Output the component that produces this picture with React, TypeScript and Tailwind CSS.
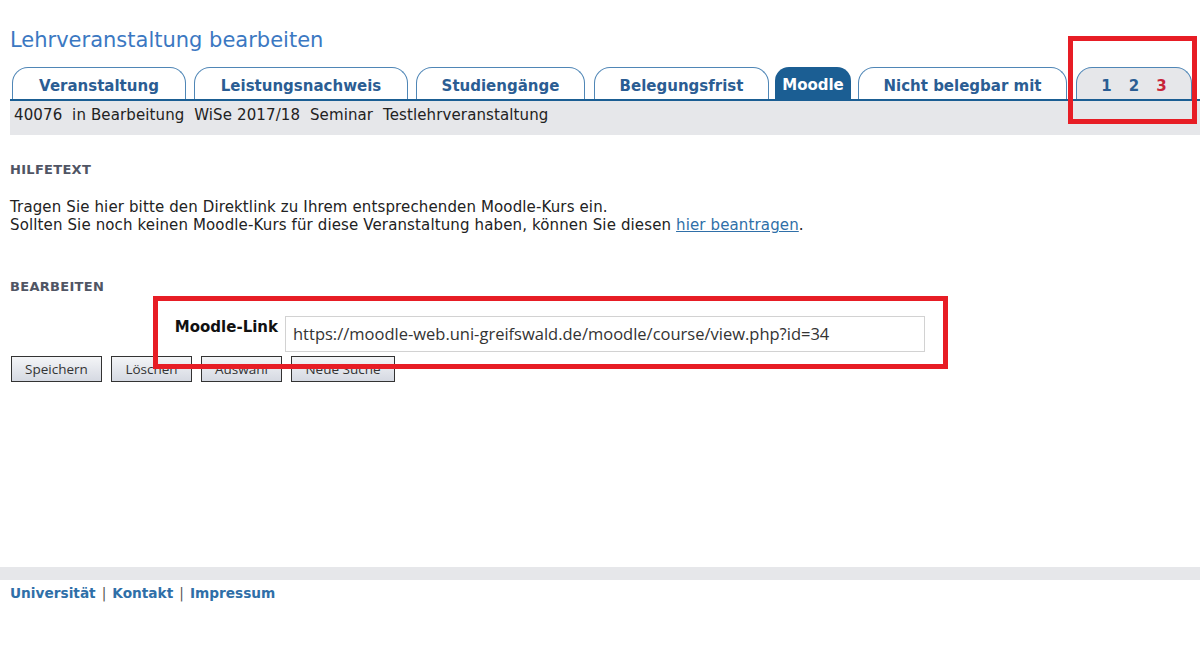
import React from 'react';

const tabs = [
  { label: 'Veranstaltung', cls: 'ml-0 w-[174px]' },
  { label: 'Leistungsnachweis', cls: 'ml-[8px] w-[214px]' },
  { label: 'Studiengänge', cls: 'ml-[8px] w-[169px]' },
  { label: 'Belegungsfrist', cls: 'ml-[9px] w-[175px]' },
];

export default function App() {
  return (
    <div className="relative min-h-[653px] bg-white font-['DejaVu_Sans','Verdana',sans-serif] text-[#222]">
      {/* Titel */}
      <h1 className="pl-[10px] pt-[27px] text-[21px] leading-[26px] text-[#3b78c2]">Lehrveranstaltung bearbeiten</h1>

      {/* Reiter */}
      <div className="ml-[10px] mt-[14px] flex items-end border-b-2 border-[#1b5e93] pl-[2px]">
        {tabs.map((t) => (
          <div
            key={t.label}
            className={`${t.cls} flex h-[32px] items-center justify-center rounded-t-[16px] border border-b-0 border-[#4f86b6] bg-white pt-[5px] text-[15px] font-bold text-[#2b5d93]`}
          >
            {t.label}
          </div>
        ))}
        <div className="ml-[6px] flex h-[32px] w-[76px] items-center justify-center rounded-t-[14px] bg-[#1b5e93] pt-[5px] text-[15px] font-bold text-white">
          Moodle
        </div>
        <div className="ml-[7px] flex h-[32px] w-[209px] items-center justify-center rounded-t-[16px] border border-b-0 border-[#4f86b6] bg-white pt-[5px] text-[15px] font-bold text-[#2b5d93]">
          Nicht belegbar mit
        </div>
        <div className="ml-[9px] flex h-[32px] w-[116px] items-center justify-center gap-[17px] rounded-t-[16px] border border-b-0 border-[#4f86b6] bg-[#e6e7ea] pt-[5px] text-[15px] font-bold text-[#2b5d93]">
          <span>1</span>
          <span>2</span>
          <span className="text-[#c8253a]">3</span>
        </div>
      </div>

      {/* Info-Leiste */}
      <div className="ml-[10px] flex h-[34px] items-start whitespace-pre bg-[#e6e7ea] pl-[4px] pt-[5px] text-[15px] leading-[18px] tracking-[0.12px] text-[#222]">
        40076  in Bearbeitung  WiSe 2017/18  Seminar  Testlehrveranstaltung
      </div>

      {/* Hilfetext */}
      <div className="px-[10px]">
        <h2 className="mt-[27px] text-[13px] font-bold leading-[16px] tracking-[0.3px] text-[#505564]">HILFETEXT</h2>
        <p className="mt-[20px] text-[15px] leading-[18px] tracking-[0.13px] text-[#222]">
          Tragen Sie hier bitte den Direktlink zu Ihrem entsprechenden Moodle-Kurs ein.
          <br />
          Sollten Sie noch keinen Moodle-Kurs für diese Veranstaltung haben, können Sie diesen{' '}
          <a href="#" className="text-[#2f6fa8] underline">hier beantragen</a>.
        </p>

        <h2 className="mt-[45px] text-[13px] font-bold leading-[16px] tracking-[0.3px] text-[#505564]">BEARBEITEN</h2>

        <div className="mt-[21px] flex items-start">
          <label className="w-[275px] pr-[7px] pt-[2px] text-right text-[15px] font-bold leading-[18px] text-[#111]">
            Moodle-Link
          </label>
          <div className="flex h-[36px] w-[640px] items-center border border-[#d2d2d2] bg-white pl-[7px] font-['Open_Sans',sans-serif] text-[16.5px] text-[#333]">
            https://moodle-web.uni-greifswald.de/moodle/course/view.php?id=34
          </div>
        </div>

        <div className="mt-[4px] flex gap-[9px] pl-[1px] font-['Open_Sans',sans-serif] text-[13.5px] text-[#333]">
          <button className="h-[26px] w-[91px] border border-[#333] bg-gradient-to-b from-[#f4f5f7] to-[#d5d9e2]">Speichern</button>
          <button className="h-[26px] w-[81px] border border-[#333] bg-gradient-to-b from-[#f4f5f7] to-[#d5d9e2]">Löschen</button>
          <button className="h-[26px] w-[81px] border border-[#333] bg-gradient-to-b from-[#f4f5f7] to-[#d5d9e2]">Auswahl</button>
          <button className="h-[26px] w-[104px] border border-[#333] bg-gradient-to-b from-[#f4f5f7] to-[#d5d9e2]">Neue Suche</button>
        </div>
      </div>

      {/* Fuß */}
      <div className="mt-[185px] h-[13px] bg-[#e6e7ea]" />
      <div className="flex gap-[6px] px-[10px] pt-[5px] text-[13.7px] font-bold leading-[17px]">
        <a href="#" className="text-[#2f6fa8]">Universität</a>
        <span className="font-normal text-[#555]">|</span>
        <a href="#" className="text-[#2f6fa8]">Kontakt</a>
        <span className="font-normal text-[#555]">|</span>
        <a href="#" className="text-[#2f6fa8]">Impressum</a>
      </div>

      {/* Markierungen */}
      <div className="pointer-events-none absolute left-[153px] top-[296px] h-[73px] w-[795px] border-[5px] border-[#e71d25]" />
      <div className="pointer-events-none absolute left-[1068px] top-[36px] h-[88px] w-[129px] border-[5px] border-[#e71d25]" />
    </div>
  );
}
